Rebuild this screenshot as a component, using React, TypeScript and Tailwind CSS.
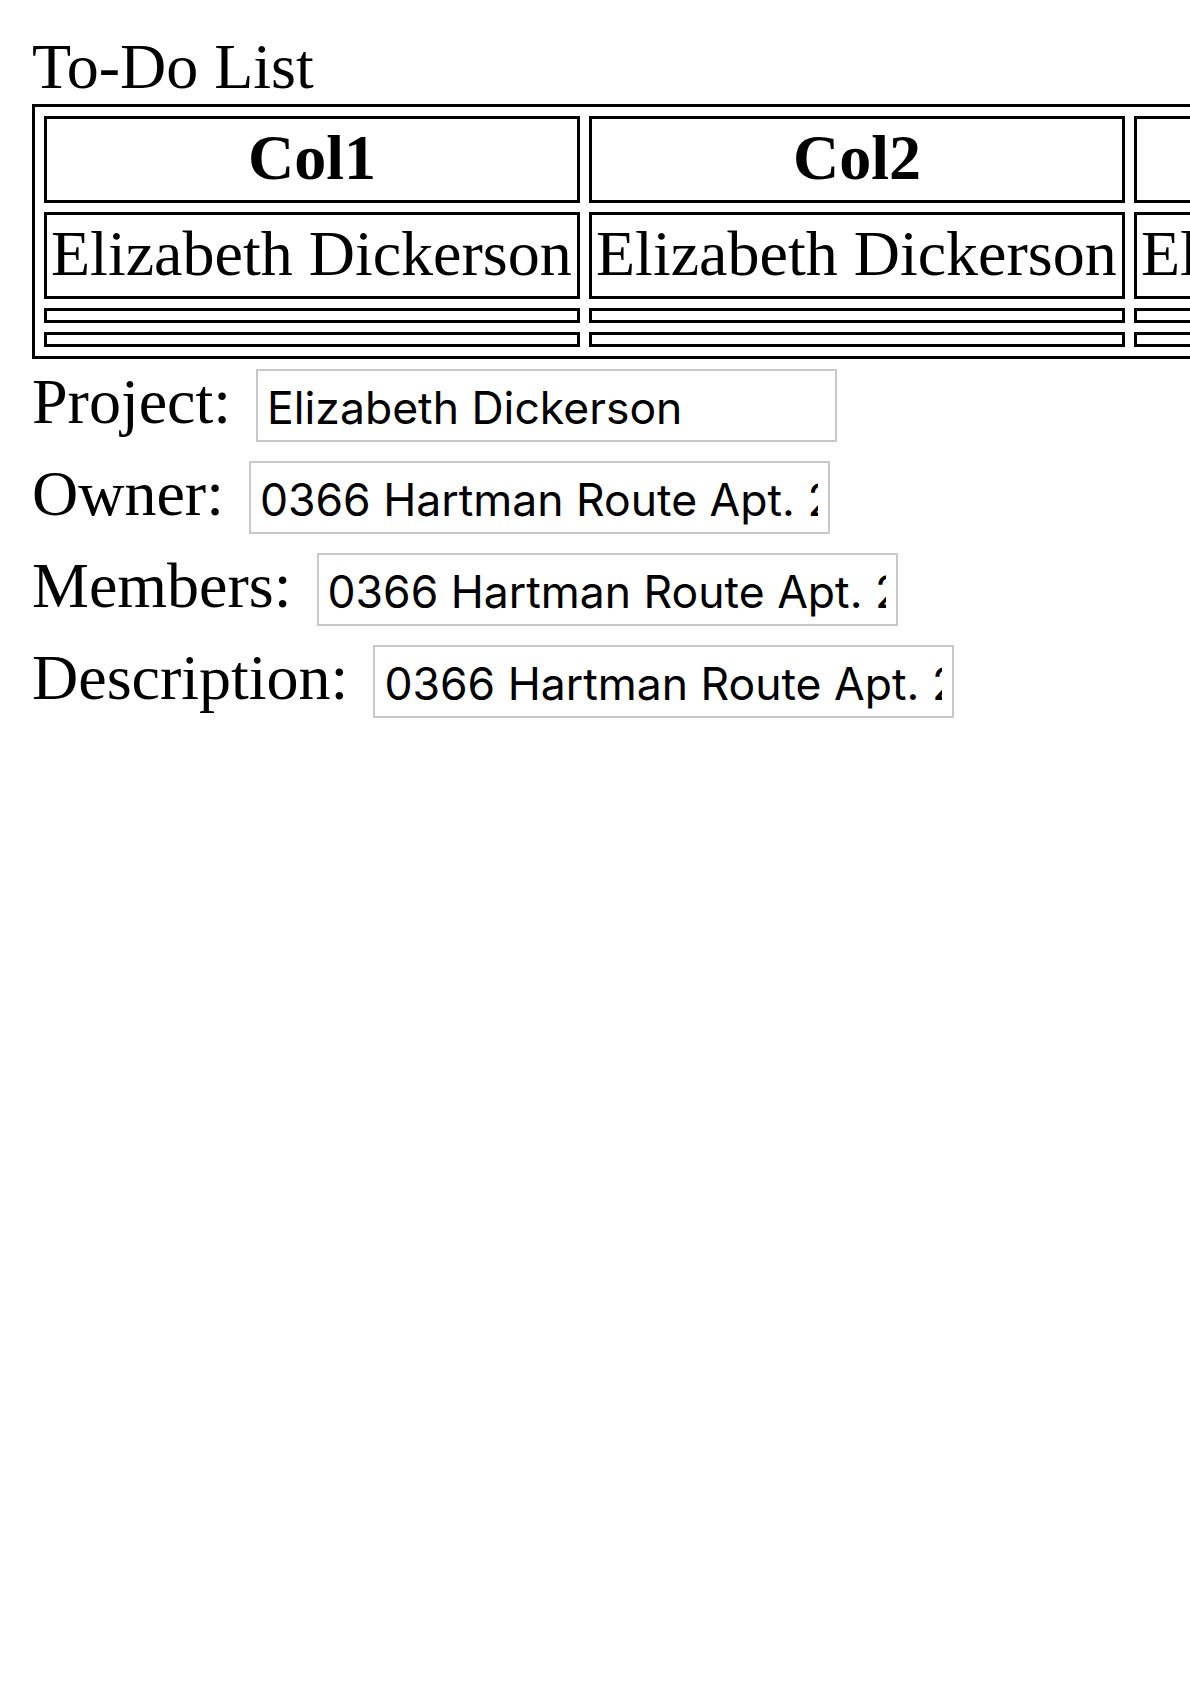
import React from "react";

const cols = ["Col1", "Col2", "Col3"];
const fields = [
  { label: "Project:", value: "Elizabeth Dickerson" },
  { label: "Owner:", value: "0366 Hartman Route Apt. 219" },
  { label: "Members:", value: "0366 Hartman Route Apt. 219" },
  { label: "Description:", value: "0366 Hartman Route Apt. 219" },
];

export default function App() {
  return (
    <div className="w-[1190px] h-[1684px] overflow-hidden bg-white text-black font-['Liberation_Serif','Times_New_Roman',serif] text-[64px] pl-[32px] pt-[32px]">
      <div className="leading-[70px] whitespace-nowrap">To-Do List</div>
      <table className="mt-[2px] border-[3px] border-black border-separate border-spacing-[9px]">
        <thead>
          <tr>
            {cols.map((c) => (
              <th
                key={c}
                className="w-[536px] min-w-[536px] border-[3px] border-black pt-[4px] pb-[7px] px-[4px] text-center font-bold leading-[70px] whitespace-nowrap align-top"
              >
                {c}
              </th>
            ))}
          </tr>
        </thead>
        <tbody>
          <tr>
            {cols.map((c) => (
              <td
                key={c}
                className="w-[536px] min-w-[536px] border-[3px] border-black pt-[4px] pb-[7px] px-[4px] text-left leading-[70px] whitespace-nowrap align-top"
              >
                Elizabeth Dickerson
              </td>
            ))}
          </tr>
          {[0, 1].map((r) => (
            <tr key={r}>
              {cols.map((c) => (
                <td key={c} className="border-[3px] border-black pt-[4px] pb-[5px] px-[4px]"></td>
              ))}
            </tr>
          ))}
        </tbody>
      </table>
      <div className="flex flex-col">
        {fields.map((f) => (
          <div key={f.label} className="flex items-start h-[92px]">
            <span className="mt-[8px] leading-[70px] whitespace-nowrap">{f.label}</span>
            <input
              readOnly
              value={f.value}
              className="mt-[10px] ml-[25px] w-[581px] h-[73px] border-2 border-[#c8c8c8] bg-white pt-[4px] pl-[9px] pr-[10px] font-['Inter',sans-serif] text-[44.5px] text-black outline-none"
            />
          </div>
        ))}
      </div>
    </div>
  );
}
